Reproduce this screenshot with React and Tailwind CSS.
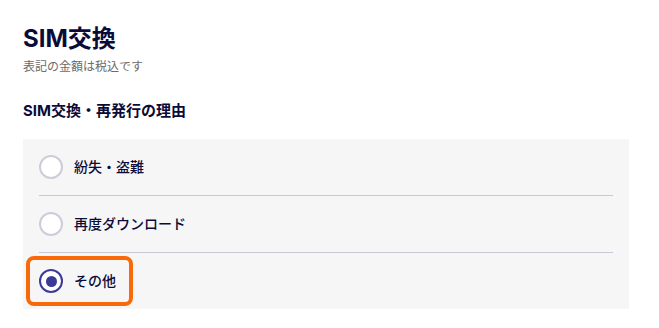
import { useState } from 'react'

const REASONS = [
  { value: 'lost', label: '紛失・盗難' },
  { value: 'redownload', label: '再度ダウンロード' },
  { value: 'other', label: 'その他' },
]

const font = { fontFamily: 'Inter, "Noto Sans CJK JP", sans-serif' }

export default function App() {
  const [reason, setReason] = useState('other')

  return (
    <div className="w-[659px] h-[328px] bg-white pl-[23px] pr-[30px] pt-[24px]" style={font}>
      <h1 className="text-[24px] leading-[30px] font-bold text-[#0b0b38]">SIM交換</h1>
      <p className="mt-[5px] text-[12px] leading-[16px] text-[#6b6b6b]">表記の金額は税込です</p>

      <h2 className="mt-[26px] text-[15px] leading-[20px] font-bold text-[#0b0b38]">SIM交換・再発行の理由</h2>

      <div className="mt-[18px] bg-[#f6f6f6] px-4">
        {REASONS.map((r, i) => (
          <Row key={r.value} item={r} checked={reason === r.value}
            last={i === REASONS.length - 1}
            onSelect={() => setReason(r.value)} />
        ))}
      </div>
    </div>
  )
}

function Row({ item, checked, last, onSelect }) {
  return (
    <div className={`flex items-center ${last ? 'h-[56px]' : 'h-[57px] border-b border-[#c9c8d8]'}`}>
      <label
        onClick={onSelect}
        className={`inline-flex items-center gap-[11px] cursor-pointer ${
          checked ? '-ml-[13px] pl-[9px] pr-[13px] py-[9px] border-4 border-[#f8690a] rounded-[8px]' : ''
        }`}>
        <span className={`w-6 h-6 rounded-full border-2 flex items-center justify-center bg-white ${
          checked ? 'border-[#3b3a98]' : 'border-[#cdccda]'
        }`}>
          {checked && <span className="w-[11px] h-[11px] rounded-full bg-[#3b3a98]" />}
        </span>
        <span className="text-[14px] leading-[20px] font-medium text-[#0b0b38]">{item.label}</span>
      </label>
    </div>
  )
}
